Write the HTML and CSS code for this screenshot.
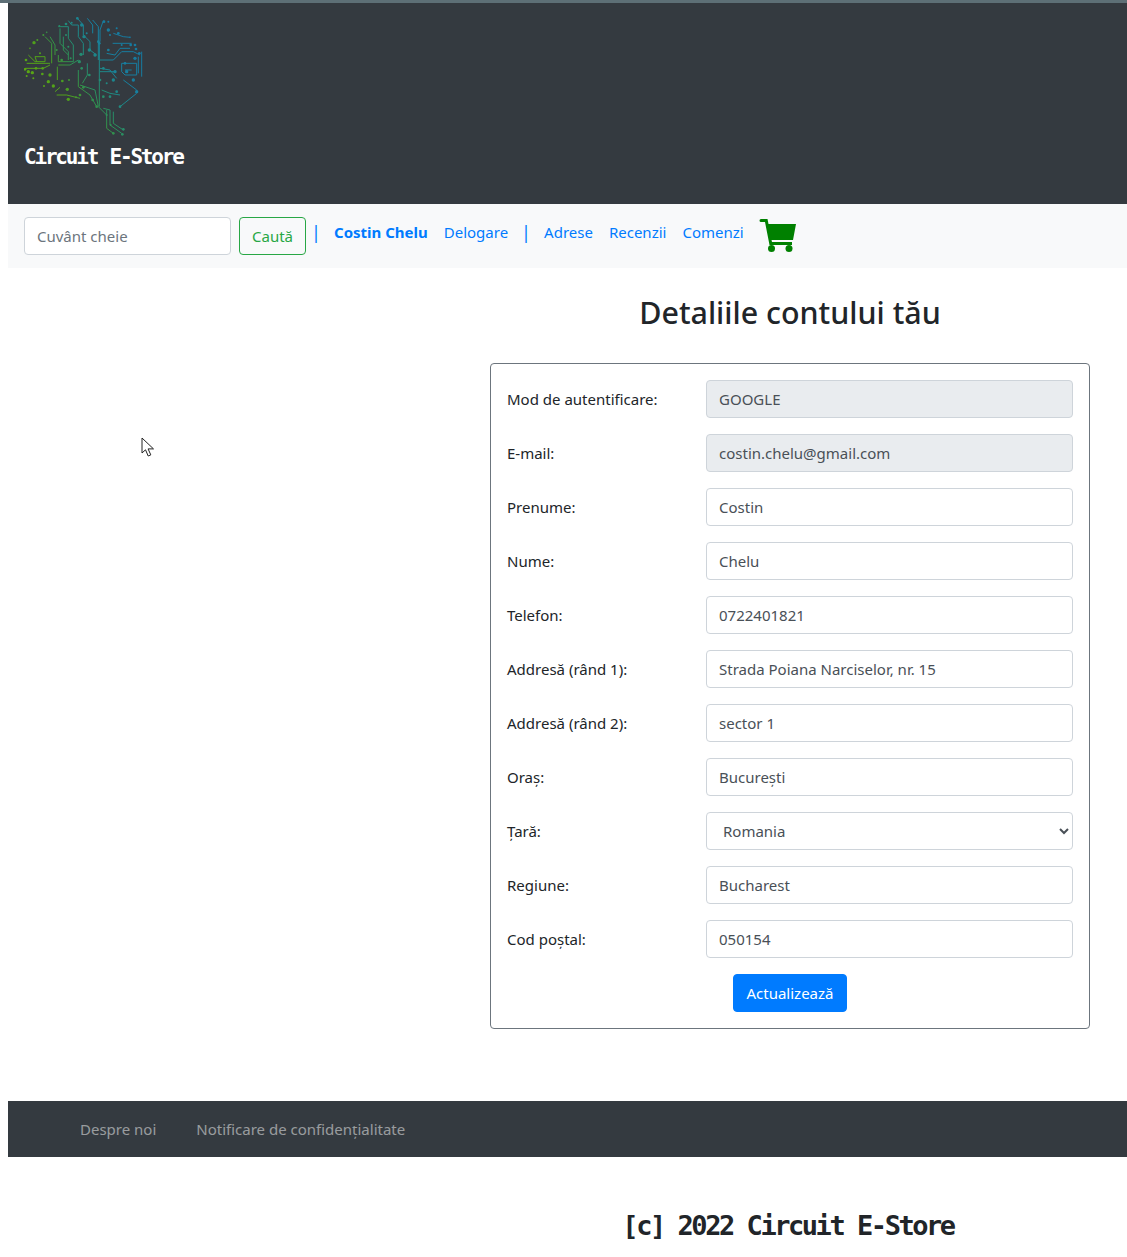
FILE: index.html
```html
<!DOCTYPE html>
<html lang="ro">
<head>
    <meta charset="UTF-8">
    <meta name="viewport" content="width=device-width, initial-scale=1.0">
    <title>Detaliile contului tău</title>
    <link rel="stylesheet" href="styles.css">
</head>
<body>
    <header class="top-header">
        <a class="brand" href="#">
            <svg class="brand-logo" width="122" height="122" viewBox="72 45 366 366" fill="none">
                <defs>
                    <linearGradient id="brain" gradientUnits="userSpaceOnUse" x1="80" y1="300" x2="400" y2="100">
                        <stop offset="0" stop-color="#62ab0c"/>
                        <stop offset="0.3" stop-color="#4fa01c"/>
                        <stop offset="0.45" stop-color="#2f9050"/>
                        <stop offset="0.6" stop-color="#1f8a80"/>
                        <stop offset="0.75" stop-color="#17809f"/>
                        <stop offset="1" stop-color="#1578a0"/>
                    </linearGradient>
                </defs>
                <g stroke="url(#brain)" stroke-width="3">
                    <path d="M205 62l10 13h20v35l15 20v35"/>
                    <path d="M232 55l18 20v30l20 20v25l20 15"/>
                    <path d="M262 55l16 20v25"/>
                    <path d="M278 60l17 20v100"/>
                    <path d="M298 125v195"/>
                    <path d="M310 62l-10 28v35"/>
                    <path d="M338 130h57"/>
                    <path d="M340 100l30 10 20 2"/>
                    <path d="M320 160l25 5 15-20h30"/>
                    <path d="M300 180h40l25-25h35l20 10"/>
                    <path d="M365 190h45v35h-35l-10-10z"/>
                    <path d="M375 210h20"/>
                    <path d="M425 155v75"/>
                    <path d="M415 170v50"/>
                    <path d="M300 205l30 5 20 25"/>
                    <path d="M300 215h45"/>
                    <path d="M370 240l40 30"/>
                    <path d="M360 320l50-40"/>
                    <path d="M305 270l25 10 30 5"/>
                    <path d="M235 210v50l35 25 20 35"/>
                    <path d="M240 255l45 15 10 50 25 25"/>
                    <path d="M262 190v35l-15 25"/>
                    <path d="M310 325l20 5v45l35 25"/>
                    <path d="M320 330v55l20 15"/>
                    <path d="M340 335v35l30 20"/>
                    <path d="M170 285h30l40 10"/>
                    <path d="M165 275l15-13"/>
                    <path d="M175 80h30v35l15 20v50h-45v-20"/>
                    <path d="M180 85v45l25 25v25"/>
                    <path d="M190 110v40l15 15"/>
                    <path d="M135 110l20 20v60"/>
                    <path d="M150 110l15 25v30"/>
                    <path d="M85 165l20 20h30v-15h-30l5 15"/>
                    <path d="M80 190h70"/>
                    <path d="M75 205h55l20-10"/>
                    <path d="M172 200v40"/>
                    <path d="M175 195h35l25-15"/>
                </g>
                <g fill="url(#brain)">
                    <circle cx="78" cy="180" r="4"/><circle cx="75" cy="208" r="4"/><circle cx="85" cy="215" r="5"/><circle cx="97" cy="218" r="5"/>
                    <circle cx="80" cy="228" r="3"/><circle cx="100" cy="235" r="3"/><circle cx="128" cy="205" r="4"/><circle cx="127" cy="222" r="4"/>
                    <circle cx="108" cy="205" r="4"/><circle cx="150" cy="225" r="5"/><circle cx="145" cy="245" r="5"/><circle cx="160" cy="258" r="5"/>
                    <circle cx="132" cy="258" r="3"/><circle cx="187" cy="243" r="4"/><circle cx="207" cy="240" r="3"/><circle cx="202" cy="268" r="5"/>
                    <circle cx="205" cy="298" r="5"/><circle cx="228" cy="292" r="3"/><circle cx="240" cy="285" r="4"/><circle cx="102" cy="128" r="5"/>
                    <circle cx="112" cy="120" r="3"/><circle cx="130" cy="105" r="3"/><circle cx="140" cy="97" r="2.5"/><circle cx="90" cy="145" r="2.5"/>
                    <circle cx="355" cy="100" r="4"/><circle cx="350" cy="85" r="3"/><circle cx="390" cy="112" r="2.5"/><circle cx="405" cy="135" r="4"/>
                    <circle cx="408" cy="147" r="4"/><circle cx="418" cy="160" r="4"/><circle cx="405" cy="175" r="5"/><circle cx="375" cy="190" r="4"/>
                    <circle cx="380" cy="215" r="5"/><circle cx="400" cy="240" r="5"/><circle cx="410" cy="275" r="5"/><circle cx="360" cy="320" r="4"/>
                    <circle cx="330" cy="290" r="4"/><circle cx="310" cy="290" r="4"/><circle cx="350" cy="275" r="4"/><circle cx="340" cy="240" r="5"/>
                    <circle cx="320" cy="250" r="3"/><circle cx="300" cy="240" r="4"/><circle cx="310" cy="205" r="4"/><circle cx="345" cy="215" r="5"/>
                    <circle cx="325" cy="150" r="4"/><circle cx="295" cy="125" r="4"/><circle cx="285" cy="165" r="5"/><circle cx="268" cy="150" r="5"/>
                    <circle cx="243" cy="163" r="5"/><circle cx="238" cy="185" r="5"/><circle cx="252" cy="110" r="5"/><circle cx="232" cy="55" r="4"/>
                    <circle cx="215" cy="68" r="3"/><circle cx="198" cy="72" r="4"/><circle cx="178" cy="78" r="3"/><circle cx="198" cy="105" r="3"/>
                    <circle cx="185" cy="180" r="4"/><circle cx="212" cy="175" r="3"/><circle cx="325" cy="65" r="3"/><circle cx="325" cy="90" r="5"/>
                    <circle cx="312" cy="65" r="4"/><circle cx="245" cy="75" r="5"/><circle cx="260" cy="100" r="3"/><circle cx="298" cy="130" r="4"/>
                    <circle cx="330" cy="105" r="3"/><circle cx="392" cy="135" r="4"/><circle cx="370" cy="388" r="4"/><circle cx="367" cy="403" r="4"/>
                    <circle cx="340" cy="400" r="4"/><circle cx="332" cy="375" r="3"/><circle cx="320" cy="345" r="3"/><circle cx="290" cy="320" r="4"/>
                    <circle cx="278" cy="300" r="4"/><circle cx="250" cy="262" r="4"/><circle cx="268" cy="225" r="4"/><circle cx="245" cy="205" r="4"/>
                    <circle cx="170" cy="150" r="3"/><circle cx="120" cy="160" r="3"/><circle cx="205" cy="140" r="3"/><circle cx="365" cy="135" r="3"/>
                </g>
            </svg>
            <span class="brand-name">Circuit E-Store</span>
        </a>
    </header>

    <nav class="navbar">
        <form class="search-form">
            <input class="form-input search-input" type="text" placeholder="Cuvânt cheie">
            <button class="btn-outline" type="button">Caută</button>
        </form>
        <ul class="nav-links">
            <li class="sep">|</li>
            <li><a class="user-name" href="#">Costin Chelu</a></li>
            <li><a href="#">Delogare</a></li>
            <li class="sep">|</li>
            <li><a href="#">Adrese</a></li>
            <li><a href="#">Recenzii</a></li>
            <li><a href="#">Comenzi</a></li>
            <li class="cart-item">
                <a href="#">
                    <svg width="38" height="33" viewBox="0 0 38 33">
                        <path fill="#008000" d="M2 0h6.5l1 5H37l-3 16H12.5l.5 2H33v3H10.5L6 3H2a1.5 1.5 0 0 1 0-3z"/>
                        <circle fill="#008000" cx="12.5" cy="29.5" r="3.5"/>
                        <circle fill="#008000" cx="30" cy="29.5" r="3.5"/>
                    </svg>
                </a>
            </li>
        </ul>
    </nav>

    <main class="content">
        <h2 class="page-title">Detaliile contului tău</h2>
        <form class="account-form">
            <div class="form-row">
                <label>Mod de autentificare:</label>
                <input class="form-input" type="text" value="GOOGLE" readonly>
            </div>
            <div class="form-row">
                <label>E-mail:</label>
                <input class="form-input" type="text" value="costin.chelu@gmail.com" readonly>
            </div>
            <div class="form-row">
                <label>Prenume:</label>
                <input class="form-input" type="text" value="Costin">
            </div>
            <div class="form-row">
                <label>Nume:</label>
                <input class="form-input" type="text" value="Chelu">
            </div>
            <div class="form-row">
                <label>Telefon:</label>
                <input class="form-input" type="text" value="0722401821">
            </div>
            <div class="form-row">
                <label>Addresă (rând 1):</label>
                <input class="form-input" type="text" value="Strada Poiana Narciselor, nr. 15">
            </div>
            <div class="form-row">
                <label>Addresă (rând 2):</label>
                <input class="form-input" type="text" value="sector 1">
            </div>
            <div class="form-row">
                <label>Oraș:</label>
                <input class="form-input" type="text" value="București">
            </div>
            <div class="form-row">
                <label>Țară:</label>
                <select class="form-input form-select">
                    <option>Romania</option>
                </select>
            </div>
            <div class="form-row">
                <label>Regiune:</label>
                <input class="form-input" type="text" value="Bucharest">
            </div>
            <div class="form-row">
                <label>Cod poștal:</label>
                <input class="form-input" type="text" value="050154">
            </div>
            <div class="form-submit">
                <button class="btn-primary" type="button">Actualizează</button>
            </div>
        </form>
    </main>

    <footer>
        <div class="footer-bar">
            <a href="#">Despre noi</a>
            <a href="#">Notificare de confidențialitate</a>
        </div>
        <p class="copyright">[c] 2022 Circuit E-Store</p>
    </footer>

    <svg class="mouse-cursor" width="14" height="21" viewBox="0 0 14 21">
        <path fill="#fff" stroke="#222" stroke-width="1" d="M1 1v15l3.5-3.2 2.7 6.2 2.6-1.1-2.7-6H12.5z"/>
    </svg>
</body>
</html>
```

FILE: styles.css
```css
body {
    margin: 0;
    padding-left: 8px;
    background-color: #fff;
    color: #212529;
    font-family: "Noto Sans", "Open Sans", sans-serif;
    font-size: 15px;
    line-height: 1.5;
    border-top: 3px solid #5d6f76;
}

a {
    text-decoration: none;
}

.top-header {
    height: 201px;
    background-color: #343a40;
}

.brand {
    display: block;
    padding: 12px 0 0 16px;
}

.brand-logo {
    display: block;
}

.brand-name {
    display: block;
    margin-top: 5px;
    color: #fff;
    font-family: "DejaVu Sans Mono", monospace;
    font-size: 21px;
    font-weight: 700;
    line-height: 30px;
    letter-spacing: -2.2px;
    word-spacing: 2px;
}

.navbar {
    display: flex;
    align-items: flex-start;
    height: 64px;
    box-sizing: border-box;
    padding: 13px 16px 0;
    background-color: #f8f9fa;
}

.search-form {
    display: flex;
    gap: 8px;
}

.form-input {
    display: block;
    box-sizing: border-box;
    width: 100%;
    height: 38px;
    padding: 6px 12px;
    background-color: #fff;
    border: 1px solid #ced4da;
    border-radius: 4px;
    color: #495057;
    font-family: inherit;
    font-size: 15px;
}

.form-input[readonly] {
    background-color: #e9ecef;
}

.form-input::placeholder {
    color: #6c757d;
    opacity: 1;
}

.search-input {
    width: 207px;
}

.btn-outline {
    height: 38px;
    padding: 0 12px;
    background: transparent;
    border: 1px solid #28a745;
    border-radius: 4px;
    color: #28a745;
    font-family: inherit;
    font-size: 15px;
}

.nav-links {
    display: flex;
    align-items: flex-start;
    gap: 16px;
    margin: 0 0 0 8px;
    padding: 0;
    list-style: none;
}

.nav-links li {
    line-height: 30px;
}

.nav-links a {
    color: #007bff;
}

.nav-links .sep {
    width: 4px;
    color: #007bff;
    font-size: 18px;
    text-indent: -3px;
}

.nav-links .user-name {
    font-weight: 700;
}

.cart-item svg {
    display: block;
    margin: 2px 0 0 -1px;
}

.content {
    width: 600px;
    margin-left: 482px;
    padding-top: 25px;
    padding-bottom: 72px;
}

.page-title {
    margin: 0 0 31px;
    text-align: center;
    font-size: 30.4px;
    font-weight: 500;
    line-height: 39px;
}

.account-form {
    box-sizing: border-box;
    padding: 16px;
    border: 1px solid #6c757d;
    border-radius: 4px;
}

.form-row {
    display: grid;
    grid-template-columns: 199px 367px;
    align-items: center;
    margin-bottom: 16px;
}

.form-submit {
    text-align: center;
}

.btn-primary {
    height: 38px;
    padding: 0 12px;
    background-color: #007bff;
    border: 1px solid #007bff;
    border-radius: 4px;
    color: #fff;
    font-family: inherit;
    font-size: 15px;
}

.footer-bar {
    display: flex;
    align-items: center;
    gap: 40px;
    height: 56px;
    padding-left: 72px;
    background-color: #343a40;
}

.footer-bar a {
    color: rgba(255, 255, 255, 0.5);
}

.copyright {
    width: 600px;
    margin: 0 0 0 480px;
    padding-top: 51px;
    text-align: center;
    font-family: "DejaVu Sans Mono", monospace;
    font-size: 27px;
    font-weight: 700;
    line-height: 36px;
    letter-spacing: -2.45px;
}

.mouse-cursor {
    position: absolute;
    left: 141px;
    top: 437px;
}
```
